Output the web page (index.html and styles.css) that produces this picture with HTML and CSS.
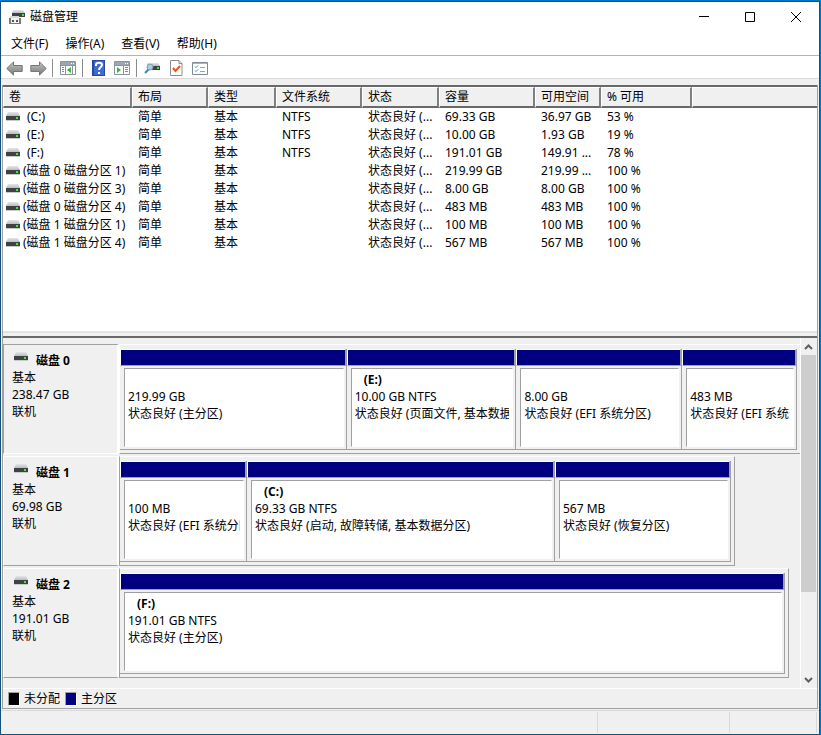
FILE: index.html
```html
<!DOCTYPE html>
<html lang="zh-Hans">
<head>
  <meta charset="UTF-8" />
  <meta name="viewport" content="width=device-width, initial-scale=1.0" />
  <title>磁盘管理</title>
  <link rel="stylesheet" href="styles.css">
</head>
<body>

<svg class="defs" aria-hidden="true">
  <linearGradient id="lid" x1="0" y1="0" x2="0" y2="1">
    <stop offset="0" stop-color="#e4e6e8" /><stop offset="1" stop-color="#b9bdc1" />
  </linearGradient>
  <linearGradient id="metal" x1="0" y1="0" x2="0" y2="1">
    <stop offset="0" stop-color="#c4c4c4" /><stop offset="1" stop-color="#777" />
  </linearGradient>
  <symbol id="drive" viewBox="0 0 14 9">
    <path d="M2 0h10l2 4H0z" fill="url(#lid)" />
    <path d="M0 4h14v4H0z" fill="#3f4245" />
    <path d="M0 8h14v1H0z" fill="#c8cacc" />
    <path d="M10 5h2v2h-2z" fill="#3fe83f" />
  </symbol>
</svg>

<div class="window">
  <header class="titlebar">
    <svg class="app-icon" width="17" height="16" viewBox="0 0 17 16" aria-hidden="true">
      <path d="M4 1h10l2 3H3z" fill="url(#lid)" />
      <path d="M3 4h13v4H3z" fill="#3f4245" />
      <path d="M13 5h2v2h-2z" fill="#3fe83f" />
      <path d="M1 7h9v3H1z" fill="#d8d8d8" />
      <path d="M0 9h12v6H0z" fill="#7b7b7b" />
      <path d="M2 9h8v5H2z" fill="#f2f2f2" />
      <path d="M3 11h2v2H3zM7 11h2v2H7z" fill="#555" />
    </svg>
    <h1>磁盘管理</h1>
    <div class="caption-buttons">
      <button type="button" aria-label="最小化"><svg width="11" height="11"><path d="M0 4.5h10" /></svg></button>
      <button type="button" aria-label="最大化"><svg width="11" height="11"><path d="M.5.5h9v9h-9z" /></svg></button>
      <button type="button" aria-label="关闭"><svg width="11" height="11"><path d="M0 0l10 10M10 0L0 10" /></svg></button>
    </div>
  </header>

  <nav class="menubar">
    <button type="button">文件(F)</button>
    <button type="button">操作(A)</button>
    <button type="button">查看(V)</button>
    <button type="button">帮助(H)</button>
  </nav>

  <div class="toolbar">
    <button type="button" aria-label="后退"><svg width="17" height="15" viewBox="0 0 17 15"><path d="M.8 7.5L7.5.9v3.6h8.7v6H7.5v3.6z" fill="url(#metal)" stroke="#777" /></svg></button>
    <button type="button" aria-label="前进"><svg width="17" height="15" viewBox="0 0 17 15"><path d="M16.2 7.5L9.5.9v3.6H.8v6h8.7v3.6z" fill="url(#metal)" stroke="#777" /></svg></button>
    <span class="sep"></span>
    <button type="button" aria-label="显示控制台树">
      <svg width="16" height="14" viewBox="0 0 16 14">
        <path d="M.5.5h15v13H.5z" fill="#fff" stroke="#8a949e" />
        <path d="M1 1h14v3H1z" fill="#9ba7b3" /><path d="M11 2h1v1h-1zM13 2h1v1h-1z" fill="#fff" />
        <path d="M5.5 4v9M12.5 4v9M1 4.5h14" stroke="#8a949e" />
        <path d="M2 6.5h2M2 8.5h2M2 10.5h2" stroke="#5a8fc8" />
        <path d="M11 6v6L7 9z" fill="#35b53a" />
      </svg>
    </button>
    <span class="sep"></span>
    <button type="button" aria-label="帮助">
      <svg width="13" height="16" viewBox="0 0 13 16">
        <path d="M0 0h13v16H0z" fill="#2649a8" /><path d="M2 1h10v14H2z" fill="#3f6bd3" />
        <path d="M4 6V5c0-3 6-3 6 0 0 2-3 2-3 5" fill="none" stroke="#fff" stroke-width="2" />
        <path d="M6 12h2v2H6z" fill="#fff" />
      </svg>
    </button>
    <button type="button" aria-label="显示操作窗格">
      <svg width="16" height="14" viewBox="0 0 16 14">
        <path d="M.5.5h15v13H.5z" fill="#fff" stroke="#8a949e" />
        <path d="M1 1h14v3H1z" fill="#9ba7b3" /><path d="M11 2h1v1h-1zM13 2h1v1h-1z" fill="#fff" />
        <path d="M9.5 4v9M1 4.5h14" stroke="#8a949e" />
        <path d="M11 6.5h3M11 8.5h3M11 10.5h3" stroke="#5a8fc8" />
        <path d="M3 6v6l4-3z" fill="#35b53a" />
      </svg>
    </button>
    <span class="sep"></span>
    <button type="button" aria-label="重新扫描磁盘">
      <svg width="16" height="12" viewBox="0 0 16 12">
        <path d="M3 1h11l2 3H3z" fill="url(#lid)" /><path d="M3 4h13v4H3z" fill="#3f4245" />
        <path d="M13 5h2v2h-2z" fill="#3fe83f" />
        <path d="M1 11l4-4" stroke="#4c7fa8" stroke-width="2" />
        <circle cx="6" cy="5" r="3" fill="#a9cbe2" stroke="#7f9db3" />
      </svg>
    </button>
    <button type="button" aria-label="属性">
      <svg width="13" height="16" viewBox="0 0 13 16">
        <path d="M.5.5h8.5l3 3v12H.5z" fill="#fff" stroke="#8f8f8f" /><path d="M9 .5v3h3" fill="none" stroke="#8f8f8f" />
        <path d="M3 8l2.500 3L10 6" fill="none" stroke="#e8561e" stroke-width="2" />
      </svg>
    </button>
    <button type="button" aria-label="设置">
      <svg width="16" height="13" viewBox="0 0 16 13">
        <path d="M.5.5h15v12H.5z" fill="#fff" stroke="#7f8a94" /><path d="M1 1h14v1H1z" fill="#aab4bd" />
        <path d="M3 4.5l1 1 2-2M3 8.5l1 1 2-2" fill="none" stroke="#2f87d8" />
        <path d="M8 5.5h5M8 9.5h5" stroke="#9aa4ad" />
      </svg>
    </button>
  </div>

  <main class="content">
    <section class="volumes">
      <table>
        <colgroup>
          <col class="c-volume"><col class="c-layout"><col class="c-type"><col class="c-fs"><col class="c-status">
          <col class="c-size"><col class="c-free"><col class="c-percent"><col>
        </colgroup>
        <thead>
          <tr><th>卷</th><th>布局</th><th>类型</th><th>文件系统</th><th>状态</th><th>容量</th><th>可用空间</th><th>% 可用</th><th></th></tr>
        </thead>
        <tbody>
          <tr><td class="letter"><svg class="drive"><use href="#drive" /></svg>(C:)</td><td>简单</td><td>基本</td><td>NTFS</td><td>状态良好 (...</td><td>69.33 GB</td><td>36.97 GB</td><td>53 %</td><td></td></tr>
          <tr><td class="letter"><svg class="drive"><use href="#drive" /></svg>(E:)</td><td>简单</td><td>基本</td><td>NTFS</td><td>状态良好 (...</td><td>10.00 GB</td><td>1.93 GB</td><td>19 %</td><td></td></tr>
          <tr><td class="letter"><svg class="drive"><use href="#drive" /></svg>(F:)</td><td>简单</td><td>基本</td><td>NTFS</td><td>状态良好 (...</td><td>191.01 GB</td><td>149.91 ...</td><td>78 %</td><td></td></tr>
          <tr><td><svg class="drive"><use href="#drive" /></svg>(磁盘 0 磁盘分区 1)</td><td>简单</td><td>基本</td><td></td><td>状态良好 (...</td><td>219.99 GB</td><td>219.99 ...</td><td>100 %</td><td></td></tr>
          <tr><td><svg class="drive"><use href="#drive" /></svg>(磁盘 0 磁盘分区 3)</td><td>简单</td><td>基本</td><td></td><td>状态良好 (...</td><td>8.00 GB</td><td>8.00 GB</td><td>100 %</td><td></td></tr>
          <tr><td><svg class="drive"><use href="#drive" /></svg>(磁盘 0 磁盘分区 4)</td><td>简单</td><td>基本</td><td></td><td>状态良好 (...</td><td>483 MB</td><td>483 MB</td><td>100 %</td><td></td></tr>
          <tr><td><svg class="drive"><use href="#drive" /></svg>(磁盘 1 磁盘分区 1)</td><td>简单</td><td>基本</td><td></td><td>状态良好 (...</td><td>100 MB</td><td>100 MB</td><td>100 %</td><td></td></tr>
          <tr><td><svg class="drive"><use href="#drive" /></svg>(磁盘 1 磁盘分区 4)</td><td>简单</td><td>基本</td><td></td><td>状态良好 (...</td><td>567 MB</td><td>567 MB</td><td>100 %</td><td></td></tr>
        </tbody>
      </table>
    </section>

    <div class="splitter"></div>

    <section class="graphical">
      <div class="disks">
        <article class="disk disk-0">
          <div class="disk-label selected">
            <h2><svg class="drive"><use href="#drive" /></svg>磁盘 0</h2>
            <p>基本</p><p>238.47 GB</p><p>联机</p>
          </div>
          <div class="strip">
            <div class="part"><div class="box"><h3></h3><p>219.99 GB</p><p>状态良好 (主分区)</p></div></div>
            <div class="part"><div class="box"><h3>(E:)</h3><p>10.00 GB NTFS</p><p>状态良好 (页面文件, 基本数据分区)</p></div></div>
            <div class="part"><div class="box"><h3></h3><p>8.00 GB</p><p>状态良好 (EFI 系统分区)</p></div></div>
            <div class="part"><div class="box"><h3></h3><p>483 MB</p><p>状态良好 (EFI 系统分区)</p></div></div>
          </div>
        </article>

        <article class="disk disk-1">
          <div class="disk-label">
            <h2><svg class="drive"><use href="#drive" /></svg>磁盘 1</h2>
            <p>基本</p><p>69.98 GB</p><p>联机</p>
          </div>
          <div class="strip">
            <div class="part"><div class="box"><h3></h3><p>100 MB</p><p>状态良好 (EFI 系统分区)</p></div></div>
            <div class="part"><div class="box"><h3>(C:)</h3><p>69.33 GB NTFS</p><p>状态良好 (启动, 故障转储, 基本数据分区)</p></div></div>
            <div class="part"><div class="box"><h3></h3><p>567 MB</p><p>状态良好 (恢复分区)</p></div></div>
          </div>
        </article>

        <article class="disk disk-2">
          <div class="disk-label">
            <h2><svg class="drive"><use href="#drive" /></svg>磁盘 2</h2>
            <p>基本</p><p>191.01 GB</p><p>联机</p>
          </div>
          <div class="strip">
            <div class="part"><div class="box"><h3>(F:)</h3><p>191.01 GB NTFS</p><p>状态良好 (主分区)</p></div></div>
          </div>
        </article>
      </div>

      <div class="scrollbar">
        <button type="button" aria-label="向上滚动"><svg width="9" height="6"><path d="M1 5l3.500-3.500L8 5" /></svg></button>
        <div class="track"><div class="thumb"></div></div>
        <button type="button" aria-label="向下滚动"><svg width="9" height="6"><path d="M1 1l3.500 3.500L8 1" /></svg></button>
      </div>
    </section>

    <div class="legend">
      <span class="key"><i class="swatch unallocated"></i>未分配</span>
      <span class="key"><i class="swatch primary"></i>主分区</span>
    </div>
  </main>

  <footer class="statusbar"><span></span><span></span><span></span></footer>
</div>

</body>
</html>
```
FILE: styles.css
```css
*, ::before {
  box-sizing: border-box;
}
body {
  margin: 0;
  padding: 1px 1px 1px 0;
  min-height: 100vh;
  display: flex;
  background: #0078cc;
  color: #000;
  font: 12px/18px "Noto Sans", "Noto Sans CJK SC", sans-serif;
}
h1, h2, h3, p {
  margin: 0;
  font-size: 12px;
}
h1 {
  font-weight: normal;
}
button {
  margin: 0;
  padding: 0;
  border: 0;
  background: none;
  color: inherit;
  font: inherit;
}
svg {
  display: block;
}
.defs {
  position: absolute;
  width: 0;
  height: 0;
}
.window {
  flex: 1;
  min-width: 0;
  display: flex;
  flex-direction: column;
  border: 1px solid #17507a;
  background: #f0f0f0;
}

/* 标题栏 */
.titlebar {
  display: flex;
  align-items: center;
  height: 30px;
  padding-left: 8px;
  background: #fff;
}
.app-icon {
  margin-right: 4px;
}
.caption-buttons {
  display: flex;
  margin-left: auto;
}
.caption-buttons button {
  width: 46px;
  height: 30px;
  display: grid;
  place-items: center;
}
.caption-buttons svg {
  fill: none;
  stroke: #000;
}

/* 菜单与工具栏 */
.menubar {
  display: flex;
  gap: 1px;
  height: 24px;
  padding-left: 2px;
  background: #fff;
  border-bottom: 1px solid #b4b4b4;
}
.menubar button {
  padding: 0 8px;
}
.toolbar {
  display: flex;
  align-items: center;
  height: 23px;
  padding: 2px 0 0 1px;
  background: #fff;
  border-bottom: 1px solid #dadada;
}
.toolbar button {
  width: 24px;
  display: grid;
  place-items: center;
}
.sep {
  width: 1px;
  height: 18px;
  margin: 0 3px 0 2px;
  background: #8c8c8c;
}

/* 卷列表 */
.content {
  flex: 1;
  display: flex;
  flex-direction: column;
  margin: 6px 1px 0;
  border: solid #a0a0a0;
  border-width: 0 1px 1px;
}
.volumes {
  height: 246px;
  overflow: hidden;
  background: #fff;
  border-top: 2px solid #696969;
}
table {
  width: 100%;
  table-layout: fixed;
  border-collapse: separate;
  border-spacing: 0;
}
.c-volume { width: 129px; }
.c-layout { width: 76px; }
.c-type { width: 68px; }
.c-fs { width: 86px; }
.c-status { width: 77px; }
.c-size { width: 96px; }
.c-free { width: 66px; }
.c-percent { width: 91px; }
th, td {
  padding: 0 0 0 6px;
  text-align: left;
  font-weight: normal;
  white-space: nowrap;
  overflow: hidden;
}
th {
  height: 21px;
  padding-left: 5px;
  background: #f0f0f0;
  border: 1px solid #fff;
  border-right: 2px solid #808080;
  border-bottom: 2px solid #696969;
}
th:last-child {
  border-right: 0;
}
td {
  height: 18px;
}
td:first-child {
  padding-left: 3px;
}
.drive {
  display: inline-block;
  width: 14px;
  height: 9px;
  margin-right: 3px;
}
.letter .drive {
  margin-right: 7px;
}
.splitter {
  height: 7px;
  border-top: 2px solid #e3e3e3;
  border-bottom: 2px solid #696969;
}

/* 磁盘图形视图 */
.graphical {
  flex: 1;
  display: flex;
  min-height: 350px;
}
.disks {
  flex: 1;
  min-width: 0;
  padding-top: 6px;
  border-right: 1px solid #fff;
  line-height: 17px;
}
.disk {
  display: grid;
  height: 110px;
  margin-bottom: 2px;
}
.disk-0 { grid-template-columns: 116px 1fr; }
.disk-1 { grid-template-columns: 116px 616fr 65fr; }
.disk-2 { grid-template-columns: 116px 670fr 11fr; }
.disk-label {
  padding: 7px 0 0 8px;
  border: 1px solid #fff;
  border-right: 2px solid #fff;
  border-bottom-color: #a0a0a0;
}
.disk-label.selected {
  border-top-color: #a0a0a0;
  border-left-color: #a0a0a0;
  border-bottom-color: #fff;
}
.disk-label h2 {
  display: flex;
  padding-left: 2px;
}
.disk-label .drive {
  margin-right: 8px;
}
.strip {
  display: grid;
  min-width: 0;
  padding: 4px 3px 3px 0;
  border: 1px solid #a0a0a0;
  border-top-color: #fff;
}
.disk-0 .strip {
  grid-template-columns: 227fr 170fr 166fr 115fr;
  border-left-color: #fff;
  border-right: 0;
}
.disk-1 .strip { grid-template-columns: 127fr 308fr 176fr; }
.part {
  min-width: 0;
  display: flex;
  flex-direction: column;
  border: 1px solid #a0a0a0;
  border-width: 0 1px 1px 0;
}
.part::before {
  content: "";
  height: 17px;
  flex: none;
  background: navy;
  border: 1px solid #fff;
  border-right-color: #a0a0a0;
  border-bottom-color: #a0a0a0;
}
.box {
  flex: 1;
  margin: 2px 2px 2px 4px;
  padding: 2px 3px 0;
  background: #fff;
  border: 1px solid #a0a0a0;
  border-right-color: #fff;
  border-bottom-color: #fff;
}
.box h3 {
  height: 17px;
  padding-left: 9px;
}
.box p {
  white-space: nowrap;
  overflow: hidden;
}

/* 滚动条 */
.scrollbar {
  width: 16px;
  display: flex;
  flex-direction: column;
  border-right: 1px solid #f0f0f0;
}
.scrollbar button {
  height: 17px;
  display: grid;
  place-items: center;
}
.scrollbar svg {
  fill: none;
  stroke: #606060;
  stroke-width: 2;
}
.track {
  flex: 1;
}
.thumb {
  height: 75%;
  background: #cdcdcd;
}

/* 图例与状态栏 */
.legend {
  display: flex;
  gap: 5px;
  height: 20px;
  padding: 1px 0 0 5px;
  border-top: 1px solid #fff;
}
.key {
  display: flex;
  align-items: center;
  gap: 4px;
}
.swatch {
  width: 12px;
  height: 14px;
  border: 1px solid #a0a0a0;
  border-right-color: #fff;
  border-bottom-color: #fff;
}
.unallocated { background: #000; }
.primary { background: navy; }
.statusbar {
  display: grid;
  grid-template-columns: 598fr 133fr 87fr;
  height: 24px;
  margin-top: 1px;
  padding: 1px 2px 1px 0;
  border-top: 1px solid #d9d9d9;
}
.statusbar span {
  border-right: 1px solid #d9d9d9;
}
```
